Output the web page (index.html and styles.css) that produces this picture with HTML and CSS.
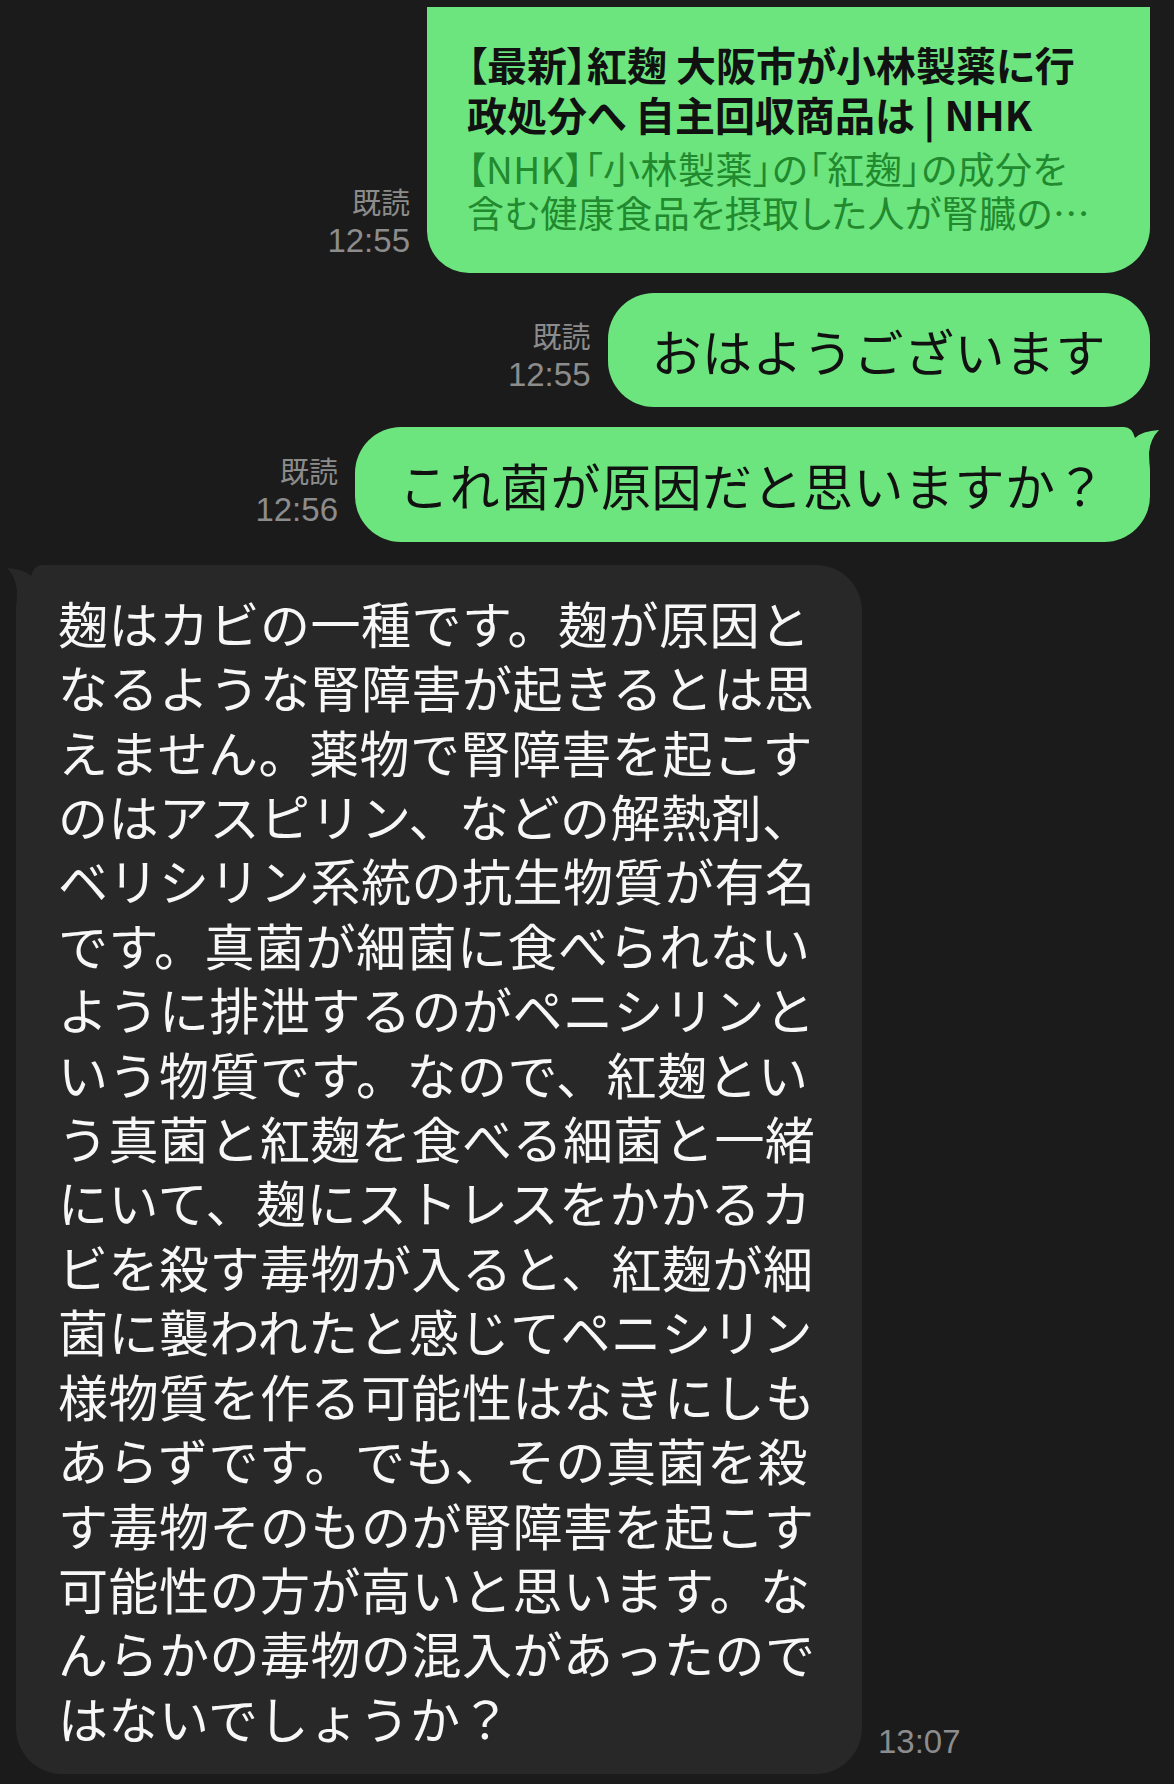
FILE: index.html
```html
<!DOCTYPE html>
<html lang="ja">
<head>
    <meta charset="UTF-8">
    <meta name="viewport" content="width=device-width, initial-scale=1.0">
    <title>トーク</title>
    <link rel="stylesheet" href="styles.css">
</head>
<body>
    <div class="chat">
        <div class="row out">
            <div class="meta">
                <span class="read">既読</span>
                <span class="time">12:55</span>
            </div>
            <div class="bubble link">
                <div class="link-title">【最新】紅麹 大阪市が小林製薬に行政処分へ 自主回収商品は | NHK</div>
                <div class="link-desc">【NHK】「小林製薬」の「紅麹」の成分を含む健康食品を摂取した人が腎臓の…</div>
            </div>
        </div>

        <div class="row out">
            <div class="meta">
                <span class="read">既読</span>
                <span class="time">12:55</span>
            </div>
            <div class="bubble">おはようございます</div>
        </div>

        <div class="row out">
            <div class="meta">
                <span class="read">既読</span>
                <span class="time">12:56</span>
            </div>
            <div class="bubble has-tail">
                <svg class="tail" width="56" height="50" viewBox="0 0 56 50"><path d="M0 0 H20 Q28 0 31 11 Q38 4 55 3 Q46 12 45 26 L46 50 H0 Z"/></svg>
                これ菌が原因だと思いますか？
            </div>
        </div>

        <div class="row in">
            <div class="bubble has-tail">
                <svg class="tail" width="56" height="50" viewBox="0 0 56 50"><path d="M0 0 H20 Q28 0 31 11 Q38 4 55 3 Q46 12 45 26 L46 50 H0 Z"/></svg>
                麹はカビの一種です。麹が原因となるような腎障害が起きるとは思えません。薬物で腎障害を起こすのはアスピリン、などの解熱剤、ベリシリン系統の抗生物質が有名です。真菌が細菌に食べられないように排泄するのがペニシリンという物質です。なので、紅麹という真菌と紅麹を食べる細菌と一緒にいて、麹にストレスをかかるカビを殺す毒物が入ると、紅麹が細菌に襲われたと感じてペニシリン様物質を作る可能性はなきにしもあらずです。でも、その真菌を殺す毒物そのものが腎障害を起こす可能性の方が高いと思います。なんらかの毒物の混入があったのではないでしょうか？
            </div>
            <div class="meta">
                <span class="time">13:07</span>
            </div>
        </div>
    </div>
</body>
</html>
```

FILE: styles.css
```css
body {
    margin: 0;
    background-color: #1b1b1b;
    font-family: "Noto Sans CJK JP", sans-serif;
    color: #111;
}
.chat {
    display: flex;
    flex-direction: column;
    gap: 20px;
    padding: 7px 24px 0 16px;
}
.row {
    display: flex;
    align-items: flex-end;
    gap: 17px;
}
.row.out {
    justify-content: flex-end;
}
.row.in {
    margin-top: 3px;
    gap: 16px;
}
.meta {
    display: flex;
    flex-direction: column;
    align-items: flex-end;
    margin-bottom: 12px;
    color: #8c8c8c;
    line-height: 40px;
}
.read {
    font-size: 29px;
}
.time {
    font-family: "Liberation Sans", "Noto Sans CJK JP", sans-serif;
    font-size: 33px;
}
.bubble {
    position: relative;
    box-sizing: border-box;
    padding: 25px 44px;
    border-radius: 46px;
    background-color: #6de57f;
    font-size: 50px;
    line-height: 64.4px;
    letter-spacing: 0.5px;
}
.row.in .bubble {
    max-width: 846px;
    padding: 25px 42px;
    background-color: #282828;
    color: #f7f7f7;
}

/* link preview card, top is cut off by the screen */
.bubble.link {
    width: 723px;
    padding: 32px 50px 39px 40px;
    border-radius: 0 0 46px 42px;
}
.link-title {
    font-size: 40px;
    font-weight: bold;
    line-height: 50px;
    letter-spacing: 0;
    font-feature-settings: "palt";
}
.link-desc {
    margin-top: 7px;
    font-size: 37px;
    line-height: 44px;
    color: #218a2e;
    font-feature-settings: "palt";
}

/* the little horn on the first bubble of a group */
.tail {
    position: absolute;
    top: 0;
    right: -10px;
    fill: #6de57f;
}
.row.in .tail {
    right: auto;
    left: -10px;
    transform: scaleX(-1);
    fill: #282828;
}
```
